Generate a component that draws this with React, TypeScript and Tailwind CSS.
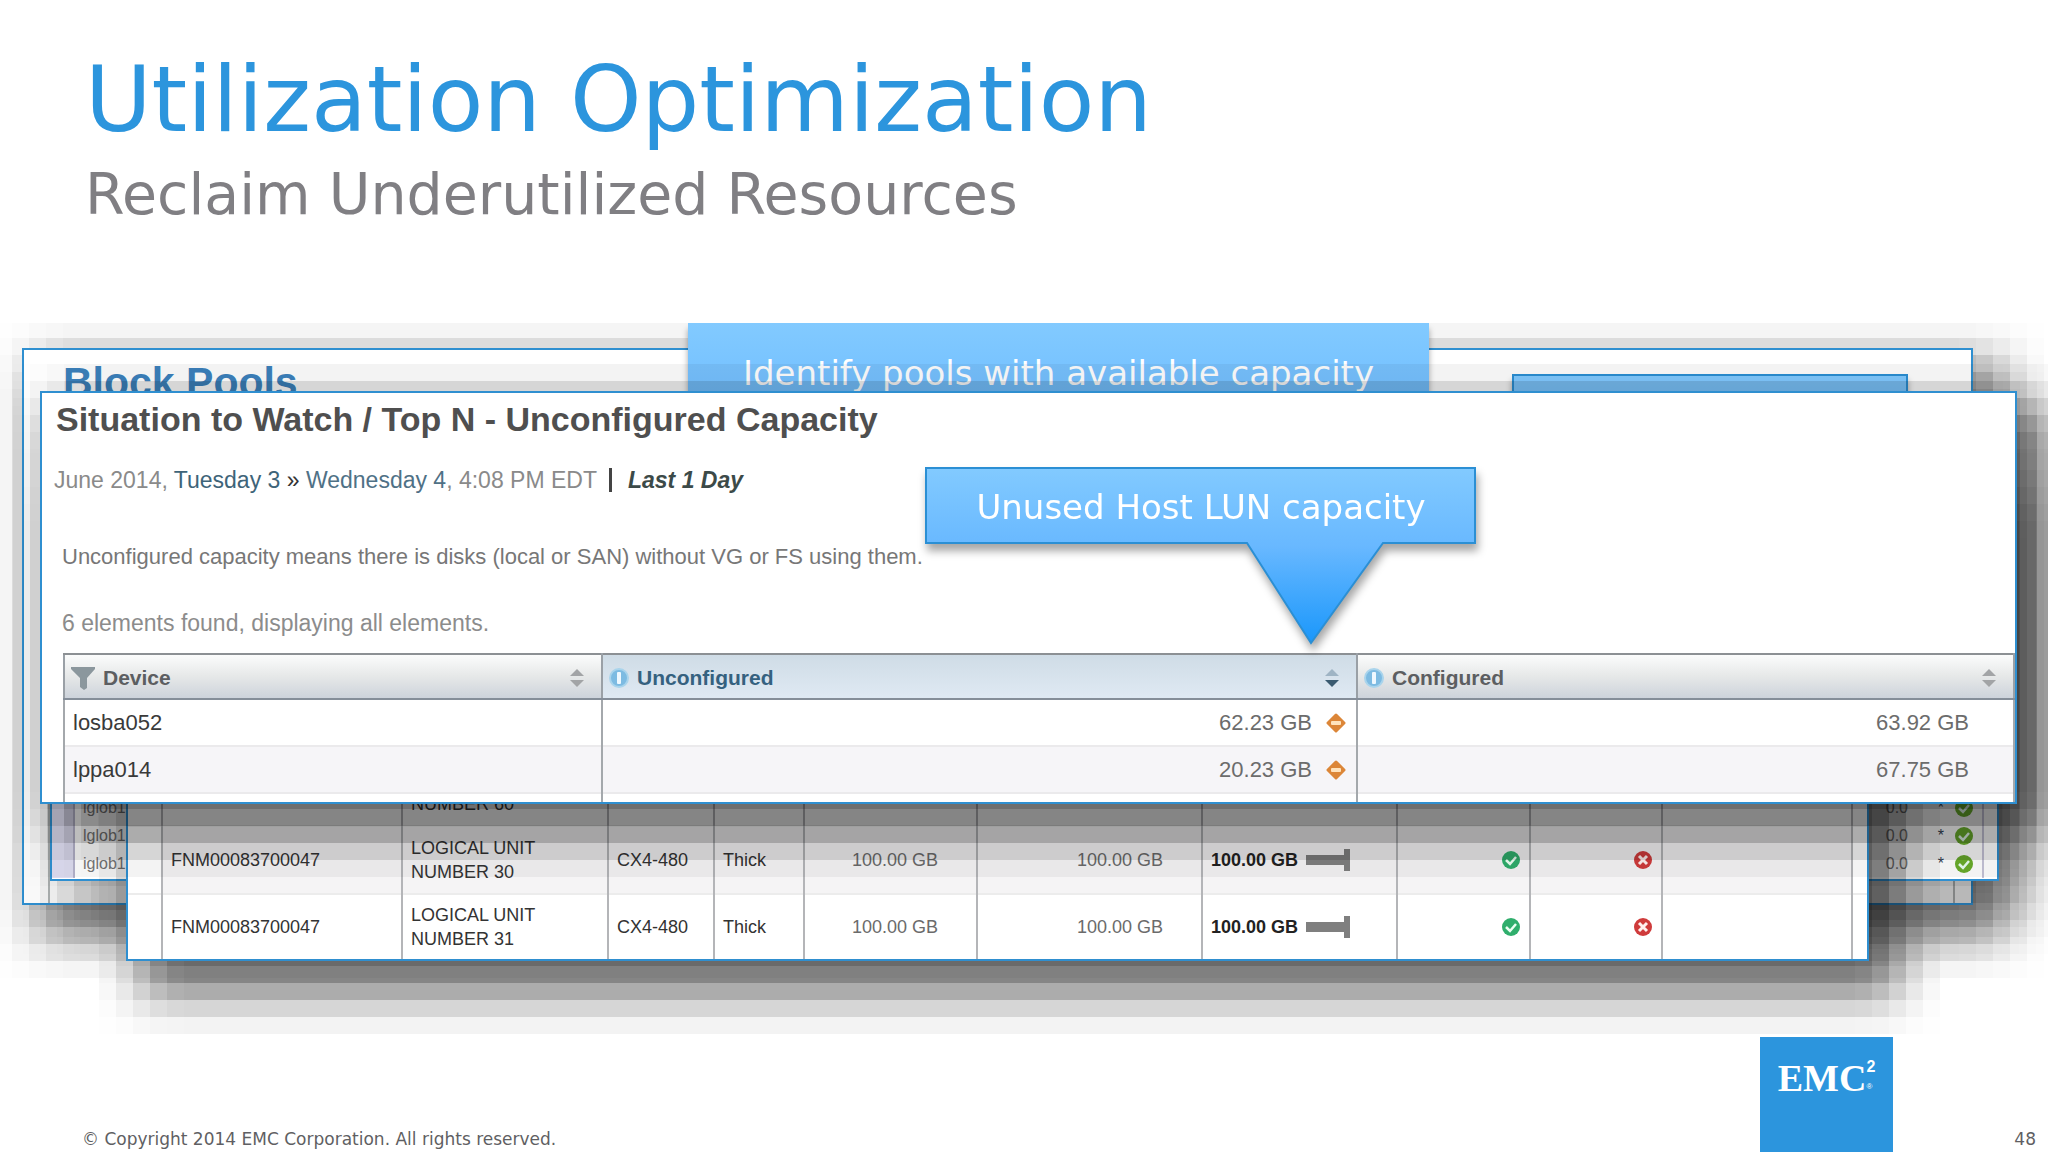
import type { ReactNode } from 'react';

const DEVICES = [
  { name: 'losba052', unconfigured: '62.23 GB', configured: '63.92 GB' },
  { name: 'lppa014', unconfigured: '20.23 GB', configured: '67.75 GB' },
];

const LUNS = [
  { array: '', unit: '60', model: '', type: '', size: '' },
  { array: 'FNM00083700047', unit: '30', model: 'CX4-480', type: 'Thick', size: '100.00 GB' },
  { array: 'FNM00083700047', unit: '31', model: 'CX4-480', type: 'Thick', size: '100.00 GB' },
];

const HOSTS = ['iglob1', 'lglob1', 'iglob1'];

function FunnelIcon() {
  return (
    <svg viewBox="0 0 24 24" className="h-6 w-6" aria-hidden="true">
      <path d="M0 1h24v2l-8 9v10l-3 2-4-3v-9L0 3z" fill="#8b979d" />
    </svg>
  );
}

function InfoIcon() {
  return (
    <svg viewBox="0 0 20 20" className="h-5 w-5" aria-hidden="true">
      <circle cx="10" cy="10" r="9" fill="#7dbbe2" stroke="#a9d4ec" strokeWidth="2" />
      <rect x="8" y="4" width="4" height="12" rx="1" fill="#eef8ff" />
    </svg>
  );
}

function SortIcon({ down = false }: { down?: boolean }) {
  return (
    <svg viewBox="0 0 16 20" className="h-5 w-4" aria-hidden="true">
      <path d="M8 1l7 7H1z" fill={down ? '#9fb4c4' : '#a2a4a6'} />
      <path d="M8 19l7-7H1z" fill={down ? '#3a5a70' : '#a2a4a6'} />
    </svg>
  );
}

function WarnIcon() {
  return (
    <svg viewBox="0 0 20 20" className="h-5 w-5" aria-hidden="true">
      <path
        d="M10 2l8 8-8 8-8-8z"
        fill="#dc8638"
        stroke="#dc8638"
        strokeWidth="3"
        strokeLinejoin="round"
      />
      <rect x="5" y="8" width="10" height="4" rx="1" fill="#ffe3bd" />
    </svg>
  );
}

function CheckIcon({ color = '#2fae6c' }: { color?: string }) {
  return (
    <svg viewBox="0 0 20 20" className="ml-auto h-5 w-5" aria-hidden="true">
      <circle cx="10" cy="10" r="9" fill={color} />
      <path d="M5 10l4 4 6-7" fill="none" stroke="#eafff2" strokeWidth="2.5" />
    </svg>
  );
}

function CrossIcon() {
  return (
    <svg viewBox="0 0 20 20" className="ml-auto h-5 w-5" aria-hidden="true">
      <circle cx="10" cy="10" r="9" fill="#cf3b3b" />
      <path d="M6 6l8 8M14 6l-8 8" fill="none" stroke="#fff0ee" strokeWidth="3" />
    </svg>
  );
}

function UsageBar() {
  return (
    <svg viewBox="0 0 44 22" className="h-[22px] w-11" aria-hidden="true">
      <path d="M0 6h38V0h6v22h-6v-6H0z" fill="#7f7f7f" />
    </svg>
  );
}

interface CaptureProps {
  className: string;
  shadeClassName?: string;
  bodyClassName?: string;
  children: ReactNode;
}

/** A screen capture with its drop shadow. The shadow fades in 17px steps on both axes. */
function Capture({
  className,
  shadeClassName = 'bg-black/60',
  bodyClassName = '',
  children,
}: CaptureProps) {
  return (
    <section className={`absolute ${className}`}>
      <div
        className={`absolute -top-[27px] -right-[71px] -bottom-[73px] -left-[27px] mask-intersect [mask-image:linear-gradient(to_right,rgb(0_0_0/0.08)_0_17px,rgb(0_0_0/0.27)_0_34px,rgb(0_0_0/0.54)_0_51px,rgb(0_0_0/0.8)_0_68px,rgb(0_0_0/0.95)_0_85px,black_0_calc(100%-85px),rgb(0_0_0/0.95)_0_calc(100%-68px),rgb(0_0_0/0.8)_0_calc(100%-51px),rgb(0_0_0/0.54)_0_calc(100%-34px),rgb(0_0_0/0.27)_0_calc(100%-17px),rgb(0_0_0/0.08)_0_100%),linear-gradient(to_bottom,rgb(0_0_0/0.08)_0_17px,rgb(0_0_0/0.27)_0_34px,rgb(0_0_0/0.54)_0_51px,rgb(0_0_0/0.8)_0_68px,rgb(0_0_0/0.95)_0_85px,black_0_calc(100%-85px),rgb(0_0_0/0.95)_0_calc(100%-68px),rgb(0_0_0/0.8)_0_calc(100%-51px),rgb(0_0_0/0.54)_0_calc(100%-34px),rgb(0_0_0/0.27)_0_calc(100%-17px),rgb(0_0_0/0.08)_0_100%)] ${shadeClassName}`}
      />
      <div className={`relative h-full overflow-hidden border-2 border-[#2f8fd0] bg-white ${bodyClassName}`}>
        {children}
      </div>
    </section>
  );
}

interface HeadCellProps {
  icon: ReactNode;
  label: string;
  sorted?: boolean;
}

function HeadCell({ icon, label, sorted = false }: HeadCellProps) {
  return (
    <th
      scope="col"
      className={`border-2 border-x-[#9aa0a6] border-t-[#8c9094] border-b-[#858e99] p-0 ${
        sorted
          ? 'bg-linear-to-b from-[#cfdce6] to-[#dfe9f3] text-[#35617f]'
          : 'bg-linear-to-b from-[#fbfcfc] via-[#e6e8e8] to-[#cdd3db] text-[#5c5e61]'
      }`}
    >
      <div className="flex h-[43px] items-center gap-2 pt-0.5 pr-4 pl-1.5 text-[21px]">
        {icon}
        <span className="flex-1 text-left">{label}</span>
        <SortIcon down={sorted} />
      </div>
    </th>
  );
}

function BlockPools() {
  return (
    <Capture className="top-[25px] right-[75px] left-[22px] h-[557px]" shadeClassName="bg-black/50">
      <h2 className="pt-[9px] pl-[39px] text-[41px] leading-[46px] font-bold text-[#3c82bd]">
        Block Pools
      </h2>
      <div className="mr-4 ml-6 h-full border-x-2 border-[#b4b8b8]" />
    </Capture>
  );
}

function HostList() {
  return (
    <Capture
      className="top-[157px] right-[49px] left-[50px] h-[401px]"
      shadeClassName="bg-black/35"
      bodyClassName="flex flex-col justify-end"
    >
      <table className="mb-px w-full table-fixed text-base text-[#777]">
        <colgroup>
          <col className="w-[22px]" />
          <col />
          <col className="w-[60px]" />
          <col className="w-[75px]" />
          <col className="w-[14px]" />
        </colgroup>
        <tbody>
          {HOSTS.map((host, i) => (
            <tr key={i} className="h-7">
              <td className="border-r-2 border-[#b6b4cc] bg-[#dddcf0]" />
              <td className="px-2">{host}</td>
              <td className="text-right">0.0</td>
              <td className="pr-2">
                <div className="flex items-center">
                  <span className="flex-1 text-right text-[#345]">*</span>
                  <span className="pl-2.5">
                    <CheckIcon color="#6aae2c" />
                  </span>
                </div>
              </td>
              <td className="border-l-2 border-[#c6c4d8]" />
            </tr>
          ))}
        </tbody>
      </table>
    </Capture>
  );
}

function LunTable() {
  return (
    <Capture
      className="top-[147px] right-[179px] left-[126px] h-[491px]"
      bodyClassName="flex flex-col justify-end"
    >
      <table className="w-full table-fixed text-lg leading-6 text-[#333]">
        <colgroup>
          <col className="w-[34px]" />
          <col className="w-[240px]" />
          <col className="w-[206px]" />
          <col className="w-[106px]" />
          <col className="w-[90px]" />
          <col className="w-[173px]" />
          <col className="w-[225px]" />
          <col className="w-[195px]" />
          <col className="w-[133px]" />
          <col className="w-[132px]" />
          <col />
          <col className="w-[15px]" />
        </colgroup>
        <tbody>
          {LUNS.map((lun) => (
            <tr
              key={lun.unit}
              className="h-[68px] border-b-2 border-[#ececec] last:h-[65px] last:border-b-0 even:bg-[#f5f4f5] [&>td]:border-r-2 [&>td]:border-r-[#b4b5b8] [&>td]:px-2"
            >
              <td className="bg-white" />
              <td>{lun.array}</td>
              <td>
                LOGICAL UNIT
                <br />
                NUMBER {lun.unit}
              </td>
              <td>{lun.model}</td>
              <td>{lun.type}</td>
              <td className="text-right text-[#6b6b6b]">
                <span className="pr-[30px]">{lun.size}</span>
              </td>
              <td className="text-right text-[#6b6b6b]">
                <span className="pr-[30px]">{lun.size}</span>
              </td>
              <td>
                {lun.size && (
                  <div className="flex items-center gap-2 font-bold text-[#222]">
                    {lun.size}
                    <UsageBar />
                  </div>
                )}
              </td>
              <td>{lun.size && <CheckIcon />}</td>
              <td>{lun.size && <CrossIcon />}</td>
              <td />
              <td className="border-r-0! bg-white" />
            </tr>
          ))}
        </tbody>
      </table>
    </Capture>
  );
}

function UnusedCallout() {
  return (
    <div className="absolute top-[74px] left-[883px] h-[178px] w-[552px] drop-shadow-[2px_7px_4px_rgba(0,0,0,0.35)]">
      <svg viewBox="0 0 552 178" className="absolute inset-0 h-full w-full" aria-hidden="true">
        <defs>
          <linearGradient id="callout" x1="0" y1="0" x2="0" y2="1">
            <stop offset="0" stopColor="#82caff" />
            <stop offset="0.45" stopColor="#68b8ff" />
            <stop offset="1" stopColor="#1a97fb" />
          </linearGradient>
        </defs>
        <path d="M1 1h549v75h-92L386 176 322 76H1z" fill="url(#callout)" stroke="#2b8fd4" strokeWidth="2" />
      </svg>
      <p className="relative pt-5 text-center font-[Verdana,'DejaVu_Sans',sans-serif] text-[34px] leading-10 text-white">
        Unused Host LUN capacity
      </p>
    </div>
  );
}

function UnconfiguredCapacity() {
  return (
    <Capture className="top-[68px] right-[31px] left-[40px] h-[413px]">
      <h2 className="pt-[6px] pl-[14px] text-[34px] leading-10 font-bold text-[#4f4f4f]">
        Situation to Watch / Top N - Unconfigured Capacity
      </h2>
      <div className="flex items-center pt-[25px] pl-3 text-[23px] leading-8 text-[#8a8a8a]">
        <p>
          June 2014, <span className="text-[#3e6479]">Tuesday 3</span>{' '}
          <span className="text-[#333]">»</span> <span className="text-[#4f7186]">Wednesday 4</span>, 4:08
          PM EDT
        </p>
        <span className="mr-4 ml-3 h-6 w-[3px] bg-[#444]" />
        <p className="font-bold text-[#3c4a48] italic">Last 1 Day</p>
      </div>
      <p className="pt-[45px] pl-5 text-[22px] leading-8 text-[#777]">
        Unconfigured capacity means there is disks (local or SAN) without VG or FS using them.
      </p>
      <p className="pt-[34px] pl-5 text-[23px] leading-8 text-[#8c8c8c]">
        6 elements found, displaying all elements.
      </p>
      <div className="pt-[14px] pl-[21px]">
        <table className="w-full table-fixed text-[22px] text-[#6c6c6c]">
          <colgroup>
            <col className="w-[538px]" />
            <col className="w-[755px]" />
            <col />
          </colgroup>
          <thead>
            <tr>
              <HeadCell icon={<FunnelIcon />} label="Device" />
              <HeadCell icon={<InfoIcon />} label="Unconfigured" sorted />
              <HeadCell icon={<InfoIcon />} label="Configured" />
            </tr>
          </thead>
          <tbody>
            {DEVICES.map((device) => (
              <tr
                key={device.name}
                className="h-[47px] border-b-2 border-[#ebeaec] even:bg-[#f6f5f8] [&>td]:border-x-2 [&>td]:border-x-[#a4a8ac]"
              >
                <td className="pl-2 text-[#3a3a3a]">{device.name}</td>
                <td className="pr-2.5">
                  <div className="flex items-center justify-end gap-3.5">
                    {device.unconfigured}
                    <WarnIcon />
                  </div>
                </td>
                <td className="pr-11 text-right">{device.configured}</td>
              </tr>
            ))}
            <tr className="h-5 [&>td]:border-x-2 [&>td]:border-x-[#a4a8ac]">
              <td />
              <td />
              <td />
            </tr>
          </tbody>
        </table>
      </div>
      <UnusedCallout />
    </Capture>
  );
}

export default function App() {
  return (
    <div className="flex min-h-screen flex-col overflow-hidden bg-white font-['Liberation_Sans',Arial,sans-serif]">
      <header className="h-[323px] px-[85px] pt-11 font-[Verdana,'DejaVu_Sans',sans-serif]">
        <h1 className="text-[91px] leading-[112px] text-[#2c95dd]">Utilization Optimization</h1>
        <p className="text-[57px] leading-[76px] text-[#807f83]">Reclaim Underutilized Resources</p>
      </header>

      <main className="relative min-h-[714px] flex-1">
        {/* nothing of the stack shows above the stage */}
        <div className="absolute inset-x-0 top-0 -bottom-5 overflow-hidden">
          <BlockPools />
          <div className="absolute top-0 left-[688px] h-[120px] w-[741px] bg-linear-to-b from-[#82caff] to-[#68b8ff] pt-[30px] text-center font-[Verdana,'DejaVu_Sans',sans-serif] text-[34px] leading-10 text-white shadow-[0_6px_6px_rgba(0,0,0,0.35)]">
            Identify pools with available capacity
          </div>
          <HostList />
          <div className="absolute top-[51px] left-[1512px] h-[60px] w-[396px] border-2 border-[#2b8fd4] bg-linear-to-b from-[#82caff] to-[#68b8ff] shadow-[0_6px_6px_rgba(0,0,0,0.35)]" />
          <LunTable />
          <UnconfiguredCapacity />
        </div>
      </main>

      <footer className="relative flex h-[115px] font-[Verdana,'DejaVu_Sans',sans-serif] text-[17px] text-[#5f5f63]">
        <p className="flex-1 self-end pl-[82px]">© Copyright 2014 EMC Corporation. All rights reserved.</p>
        <div className="flex w-[133px] items-start justify-center bg-[#2c95dd] pt-[18px] font-['Liberation_Serif',serif] text-white">
          <span className="text-[38px] leading-[46px] font-bold">EMC</span>
          <span className="flex flex-col font-['Liberation_Sans',sans-serif] font-bold">
            <span className="text-base leading-6">2</span>
            <span className="text-[8px] leading-4 font-normal">®</span>
          </span>
        </div>
        <p className="w-[155px] self-end pr-3 text-right">48</p>
      </footer>
    </div>
  );
}
